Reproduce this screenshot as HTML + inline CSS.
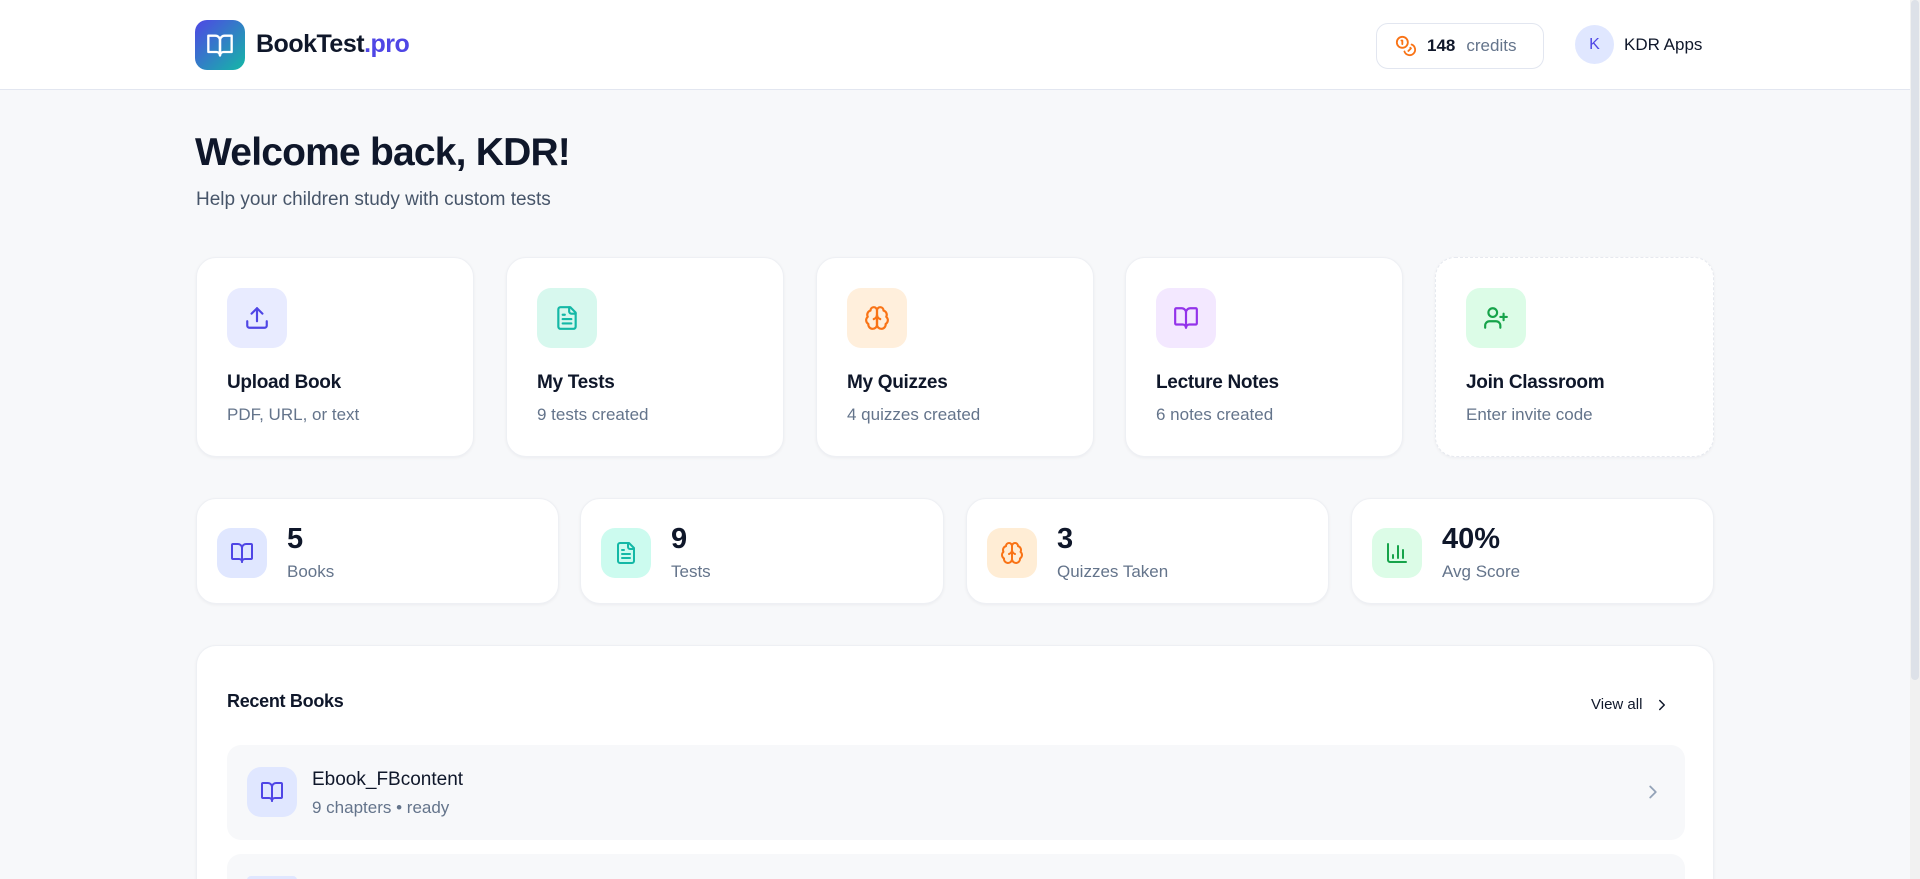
<!DOCTYPE html>
<html><head><meta charset="utf-8"><style>
*{box-sizing:border-box;margin:0;padding:0}
html,body{width:1920px;height:879px;overflow:hidden}
body{background:#f7f8fa;font-family:"Liberation Sans",sans-serif;color:#0f172a}
#w{position:relative;width:1920px;height:879px;overflow:hidden}
.hdr{position:absolute;left:0;top:0;width:1910px;height:90px;background:#fff;border-bottom:1px solid #e2e6f0}
.sb{position:absolute;right:0;top:0;width:10px;height:879px;background:#f1f1f1}
.sb div{position:absolute;left:1px;top:0;width:8px;height:680px;background:#dde1e8;border-radius:4px}
.abs{position:absolute}
.card{position:absolute;background:#fff;border-radius:20px;box-shadow:0 1px 3px rgba(15,23,42,.05);border:1px solid #eef0f4}
.ib{position:absolute;border-radius:14px;display:flex;align-items:center;justify-content:center}
.t{position:absolute;font-weight:bold;font-size:19px;letter-spacing:-.3px}
.s{position:absolute;font-size:17px;color:#64748b}
svg{fill:none;stroke-linecap:round;stroke-linejoin:round;stroke-width:2}
</style></head><body><div id="w">
<div class="hdr">
  <div class="abs" style="left:195px;top:20px;width:50px;height:50px;border-radius:12px;background:linear-gradient(135deg,#4f46e5,#14b8a6);display:flex;align-items:center;justify-content:center">
    <svg width="28" height="28" viewBox="0 0 24 24" stroke="#fff"><path d="M2 4h6a4 4 0 0 1 4 4v13a3 3 0 0 0-3-3H2z"/><path d="M22 4h-6a4 4 0 0 0-4 4v13a3 3 0 0 1 3-3h7z"/></svg>
  </div>
  <div class="abs" style="left:256px;top:30px;font-size:25px;font-weight:bold;letter-spacing:-.5px">BookTest<span style="color:#4f46e5">.pro</span></div>
  <div class="abs" style="left:1376px;top:23px;width:168px;height:46px;border:1px solid #e2e6f0;border-radius:12px;display:flex;align-items:center;padding-left:18px;font-size:17px">
    <svg width="22" height="22" viewBox="0 0 24 24" stroke="#f97316"><circle cx="8" cy="8" r="6"/><path d="M18.1 10.4A6 6 0 1 1 10.3 18"/><path d="M7 6h1v4"/><path d="m16.7 13.9.7.7-2.8 2.8"/></svg>
    <b style="margin-left:10px">148</b><span style="margin-left:11px;color:#64748b">credits</span>
  </div>
  <div class="abs" style="left:1575px;top:25px;width:39px;height:39px;border-radius:50%;background:#e0e7ff;color:#4f46e5;font-size:16px;display:flex;align-items:center;justify-content:center">K</div>
  <div class="abs" style="left:1624px;top:35px;font-size:17px">KDR Apps</div>
</div>
<div class="sb"><div></div></div>

<div class="abs" style="left:195px;top:131px;font-size:39px;font-weight:bold;letter-spacing:-.8px">Welcome back, KDR!</div>
<div class="abs" style="left:196px;top:189px;font-size:19px;color:#475569">Help your children study with custom tests</div>

<div class="card" style="left:196px;top:257px;width:278px;height:200px">
  <div class="ib" style="left:30px;top:30px;width:60px;height:60px;background:#e8ebff"><svg width="26" height="26" viewBox="0 0 24 24" stroke="#4f46e5"><path d="M21 15v4a2 2 0 0 1-2 2H5a2 2 0 0 1-2-2v-4"/><path d="M17 8l-5-5-5 5"/><path d="M12 3v12"/></svg></div>
  <div class="t" style="left:30px;top:114px">Upload Book</div><div class="s" style="left:30px;top:147px">PDF, URL, or text</div>
</div>
<div class="card" style="left:506px;top:257px;width:278px;height:200px">
  <div class="ib" style="left:30px;top:30px;width:60px;height:60px;background:#d7f8ee"><svg width="26" height="26" viewBox="0 0 24 24" stroke="#14b8a6"><path d="M15 2H6a2 2 0 0 0-2 2v16a2 2 0 0 0 2 2h12a2 2 0 0 0 2-2V7z"/><path d="M14 2v4a2 2 0 0 0 2 2h4"/><path d="M10 9H8M16 13H8M16 17H8"/></svg></div>
  <div class="t" style="left:30px;top:114px">My Tests</div><div class="s" style="left:30px;top:147px">9 tests created</div>
</div>
<div class="card" style="left:816px;top:257px;width:278px;height:200px">
  <div class="ib" style="left:30px;top:30px;width:60px;height:60px;background:#ffefdc"><svg width="26" height="26" viewBox="0 0 24 24" stroke="#f97316"><path d="M12 5a3 3 0 1 0-5.997.125 4 4 0 0 0-2.526 5.77 4 4 0 0 0 .556 6.588A4 4 0 1 0 12 18Z"/><path d="M12 5a3 3 0 1 1 5.997.125 4 4 0 0 1 2.526 5.77 4 4 0 0 1-.556 6.588A4 4 0 1 1 12 18Z"/><path d="M15 13a4.5 4.5 0 0 1-3-4 4.5 4.5 0 0 1-3 4M12 18V9"/></svg></div>
  <div class="t" style="left:30px;top:114px">My Quizzes</div><div class="s" style="left:30px;top:147px">4 quizzes created</div>
</div>
<div class="card" style="left:1125px;top:257px;width:278px;height:200px">
  <div class="ib" style="left:30px;top:30px;width:60px;height:60px;background:#f3e8ff"><svg width="26" height="26" viewBox="0 0 24 24" stroke="#9333ea"><path d="M12 7v14"/><path d="M3 18a1 1 0 0 1-1-1V4a1 1 0 0 1 1-1h5a4 4 0 0 1 4 4 4 4 0 0 1 4-4h5a1 1 0 0 1 1 1v13a1 1 0 0 1-1 1h-6a3 3 0 0 0-3 3 3 3 0 0 0-3-3z"/></svg></div>
  <div class="t" style="left:30px;top:114px">Lecture Notes</div><div class="s" style="left:30px;top:147px">6 notes created</div>
</div>
<div class="card" style="left:1435px;top:257px;width:279px;height:200px;border:1px dashed #e6e9ef">
  <div class="ib" style="left:30px;top:30px;width:60px;height:60px;background:#dcfce7"><svg width="26" height="26" viewBox="0 0 24 24" stroke="#16a34a"><path d="M16 21v-2a4 4 0 0 0-4-4H6a4 4 0 0 0-4 4v2"/><circle cx="9" cy="7" r="4"/><path d="M19 8v6M22 11h-6"/></svg></div>
  <div class="t" style="left:30px;top:114px">Join Classroom</div><div class="s" style="left:30px;top:147px">Enter invite code</div>
</div>

<div class="card" style="left:196px;top:498px;width:363px;height:106px">
  <div class="ib" style="left:20px;top:29px;width:50px;height:50px;background:#e0e7ff"><svg width="24" height="24" viewBox="0 0 24 24" stroke="#4f46e5"><path d="M12 7v14"/><path d="M3 18a1 1 0 0 1-1-1V4a1 1 0 0 1 1-1h5a4 4 0 0 1 4 4 4 4 0 0 1 4-4h5a1 1 0 0 1 1 1v13a1 1 0 0 1-1 1h-6a3 3 0 0 0-3 3 3 3 0 0 0-3-3z"/></svg></div>
  <div class="abs" style="left:90px;top:24px;font-size:29px;font-weight:bold">5</div><div class="s" style="left:90px;top:63px">Books</div>
</div>
<div class="card" style="left:580px;top:498px;width:364px;height:106px">
  <div class="ib" style="left:20px;top:29px;width:50px;height:50px;background:#ccfbef"><svg width="24" height="24" viewBox="0 0 24 24" stroke="#14b8a6"><path d="M15 2H6a2 2 0 0 0-2 2v16a2 2 0 0 0 2 2h12a2 2 0 0 0 2-2V7z"/><path d="M14 2v4a2 2 0 0 0 2 2h4"/><path d="M10 9H8M16 13H8M16 17H8"/></svg></div>
  <div class="abs" style="left:90px;top:24px;font-size:29px;font-weight:bold">9</div><div class="s" style="left:90px;top:63px">Tests</div>
</div>
<div class="card" style="left:966px;top:498px;width:363px;height:106px">
  <div class="ib" style="left:20px;top:29px;width:50px;height:50px;background:#ffedd5"><svg width="24" height="24" viewBox="0 0 24 24" stroke="#f97316"><path d="M12 5a3 3 0 1 0-5.997.125 4 4 0 0 0-2.526 5.77 4 4 0 0 0 .556 6.588A4 4 0 1 0 12 18Z"/><path d="M12 5a3 3 0 1 1 5.997.125 4 4 0 0 1 2.526 5.77 4 4 0 0 1-.556 6.588A4 4 0 1 1 12 18Z"/><path d="M15 13a4.5 4.5 0 0 1-3-4 4.5 4.5 0 0 1-3 4M12 18V9"/></svg></div>
  <div class="abs" style="left:90px;top:24px;font-size:29px;font-weight:bold">3</div><div class="s" style="left:90px;top:63px">Quizzes Taken</div>
</div>
<div class="card" style="left:1351px;top:498px;width:363px;height:106px">
  <div class="ib" style="left:20px;top:29px;width:50px;height:50px;background:#dcfce7"><svg width="24" height="24" viewBox="0 0 24 24" stroke="#16a34a"><path d="M3 3v16a2 2 0 0 0 2 2h16"/><path d="M18 17V9M13 17V5M8 17v-3"/></svg></div>
  <div class="abs" style="left:90px;top:24px;font-size:29px;font-weight:bold">40%</div><div class="s" style="left:90px;top:63px">Avg Score</div>
</div>

<div class="card" style="left:196px;top:645px;width:1518px;height:234px;border-radius:20px 20px 0 0;border-bottom:none;overflow:hidden">
  <div class="abs" style="left:30px;top:45px;font-size:18px;font-weight:bold;letter-spacing:-.3px">Recent Books</div>
  <div class="abs" style="left:1394px;top:50px;font-size:15px">View all</div>
  <svg class="abs" style="left:1456px;top:50px" width="18" height="18" viewBox="0 0 24 24" stroke="#0f172a"><path d="m9 18 6-6-6-6"/></svg>
  <div class="abs" style="left:30px;top:99px;width:1458px;height:95px;background:#f7f8fa;border-radius:14px">
    <div class="ib" style="left:20px;top:22px;width:50px;height:50px;background:#e0e7ff"><svg width="24" height="24" viewBox="0 0 24 24" stroke="#4f46e5"><path d="M12 7v14"/><path d="M3 18a1 1 0 0 1-1-1V4a1 1 0 0 1 1-1h5a4 4 0 0 1 4 4 4 4 0 0 1 4-4h5a1 1 0 0 1 1 1v13a1 1 0 0 1-1 1h-6a3 3 0 0 0-3 3 3 3 0 0 0-3-3z"/></svg></div>
    <div class="abs" style="left:85px;top:24px;font-size:19px">Ebook_FBcontent</div>
    <div class="s" style="left:85px;top:53px">9 chapters • ready</div>
    <svg class="abs" style="left:1415px;top:36px" width="22" height="22" viewBox="0 0 24 24" stroke="#94a3b8"><path d="m9 18 6-6-6-6"/></svg>
  </div>
  <div class="abs" style="left:30px;top:208px;width:1458px;height:26px;background:#f7f8fa;border-radius:14px 14px 0 0;overflow:hidden">
    <div class="ib" style="left:20px;top:22px;width:50px;height:4px;border-radius:14px 14px 0 0;background:#e0e7ff"></div>
  </div>
</div>
</div></body></html>
